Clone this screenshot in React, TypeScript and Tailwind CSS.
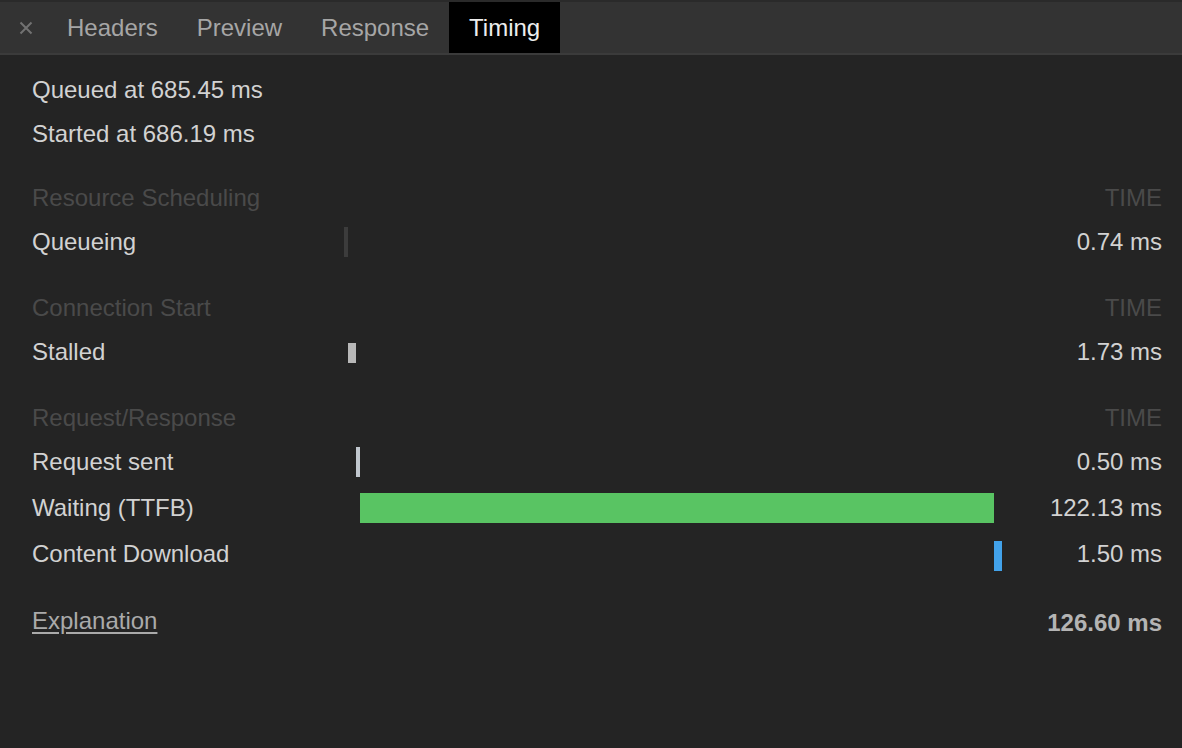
import React from "react";

const font = { fontFamily: '"Liberation Sans", Arial, Helvetica, sans-serif' };

type Row = { label: string; value: string; left: number; width: number; color: string; top: number; height: number };

function Section({ title }: { title: string }) {
  return (
    <div className="flex h-[44px] items-center justify-between text-[#4a4a4a]">
      <span>{title}</span>
      <span>TIME</span>
    </div>
  );
}

function BarRow({ r, h = 44 }: { r: Row; h?: number }) {
  return (
    <div className="flex items-center" style={{ height: h }}>
      <div className="w-[312px] shrink-0 text-[#d2d2d2]">{r.label}</div>
      <div className="relative h-full w-[658px] shrink-0">
        <div
          className="absolute"
          style={{ left: r.left, width: r.width, top: r.top, height: r.height, backgroundColor: r.color }}
        />
      </div>
      <div className="flex-1 text-right text-[#d2d2d2]">{r.value}</div>
    </div>
  );
}

export default function App() {
  return (
    <div className="h-[748px] w-[1182px] overflow-hidden bg-[#242424] text-[24px]" style={font}>
      <div className="flex h-[55px] items-end border-t-2 border-[#2a2a2a] bg-[#333333]">
        <div className="flex h-[53px] w-full items-stretch border-b-2 border-[#3b3b3b]">
          <div className="flex w-[47px] items-center justify-center pl-[5px] text-[#727272]">
            <svg width="14" height="14" viewBox="0 0 14 14">
              <path d="M1.5 1.5L12.5 12.5M12.5 1.5L1.5 12.5" stroke="#727272" strokeWidth="2" />
            </svg>
          </div>
          <div className="flex items-center pl-[20px] pr-[19px] text-[#a6a6a6]">Headers</div>
          <div className="flex items-center pl-[20px] pr-[19px] text-[#a6a6a6]">Preview</div>
          <div className="flex items-center px-[20px] text-[#a6a6a6]">Response</div>
          <div className="flex w-[111px] items-center justify-center bg-black text-[#ededed]">Timing</div>
        </div>
      </div>
      <div className="pl-[32px] pr-[20px] pt-[13px]">
        <div className="flex h-[44px] items-center text-[#d2d2d2]">Queued at 685.45 ms</div>
        <div className="flex h-[44px] items-center text-[#d2d2d2]">Started at 686.19 ms</div>
        <div className="h-[20px]" />
        <Section title="Resource Scheduling" />
        <BarRow r={{ label: "Queueing", value: "0.74 ms", left: 0, width: 4, color: "#3c3c3c", top: 7, height: 30 }} />
        <div className="h-[22px]" />
        <Section title="Connection Start" />
        <BarRow r={{ label: "Stalled", value: "1.73 ms", left: 4, width: 8, color: "#b8b8b8", top: 13, height: 20 }} />
        <div className="h-[22px]" />
        <Section title="Request/Response" />
        <BarRow r={{ label: "Request sent", value: "0.50 ms", left: 12, width: 4, color: "#c1c7ce", top: 7, height: 30 }} />
        <BarRow h={48} r={{ label: "Waiting (TTFB)", value: "122.13 ms", left: 16, width: 634, color: "#59c463", top: 9, height: 30 }} />
        <BarRow h={44} r={{ label: "Content Download", value: "1.50 ms", left: 650, width: 8, color: "#42a2ea", top: 9, height: 30 }} />
        <div className="flex h-[88px] items-center justify-between pt-[2px]">
          <span className="text-[#aaaaaa] underline underline-offset-[3px]">Explanation</span>
          <span className="mt-[4px] font-bold text-[#b4b4b4]">126.60 ms</span>
        </div>
      </div>
    </div>
  );
}
